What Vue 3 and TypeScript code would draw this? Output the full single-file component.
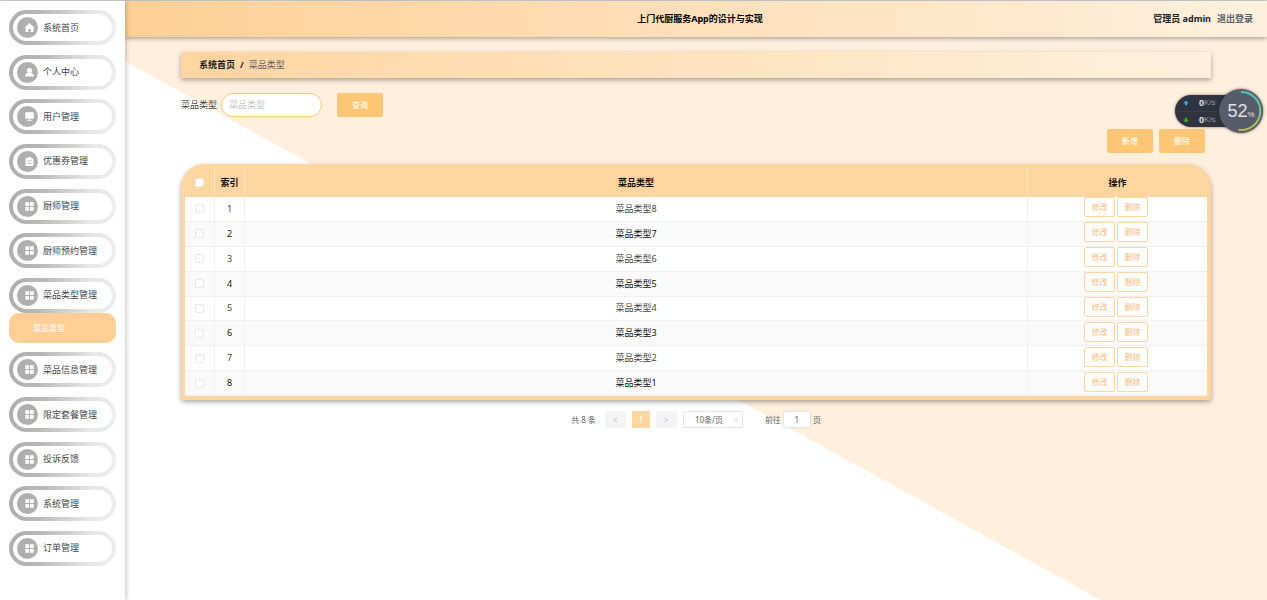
<script setup lang="ts">
import { ref } from 'vue'

interface MenuItem {
  label: string
  icon: 'home' | 'user' | 'screen' | 'clip' | 'grid'
  child?: string
}

const menu: MenuItem[] = [
  { label: '系统首页', icon: 'home' },
  { label: '个人中心', icon: 'user' },
  { label: '用户管理', icon: 'screen' },
  { label: '优惠券管理', icon: 'clip' },
  { label: '厨师管理', icon: 'grid' },
  { label: '厨师预约管理', icon: 'grid' },
  { label: '菜品类型管理', icon: 'grid', child: '菜品类型' },
  { label: '菜品信息管理', icon: 'grid' },
  { label: '限定套餐管理', icon: 'grid' },
  { label: '投诉反馈', icon: 'grid' },
  { label: '系统管理', icon: 'grid' },
  { label: '订单管理', icon: 'grid' },
]

const icons: Record<MenuItem['icon'], string> = {
  home: 'M8 0 L0 7.5 V9 H1 V16 H6 V10.5 H10 V16 H15 V9 H16 V7.5 Z',
  user: 'M8 0 C11 0 12.6 2 12.6 4.4 C12.6 6.4 11.6 7.8 10.4 8.6 C13.6 9.4 15.8 11 15.8 15 H0.2 C0.2 11 2.4 9.4 5.6 8.6 C4.4 7.8 3.4 6.4 3.4 4.4 C3.4 2 5 0 8 0 Z',
  screen: 'M0.5 0.5 H15.5 V12 H9 V14 H12 V15.5 H4 V14 H7 V12 H0.5 Z',
  clip: 'M5 0 H11 V2 H15 V16 H1 V2 H5 Z M4 6 V7.4 H12 V6 Z M4 10.5 V11.9 H12 V10.5 Z',
  grid: 'M0.5 0.5 H7.2 V7.2 H0.5 Z M8.8 0.5 H15.5 V7.2 H8.8 Z M0.5 8.8 H7.2 V15.5 H0.5 Z M8.8 8.8 H15.5 V15.5 H8.8 Z',
}

const rows = ref([8, 7, 6, 5, 4, 3, 2, 1].map((n) => ({ name: `菜品类型${n}`, checked: false })))
const keyword = ref('')
const pageSize = ref('10')
const jump = ref('1')
</script>

<template>
  <div class="layout">
    <nav class="sidebar">
      <div v-for="item in menu" :key="item.label" class="group">
        <a href="#" class="item">
          <span class="disc">
            <svg viewBox="0 0 16 16" aria-hidden="true"><path :d="icons[item.icon]" fill-rule="evenodd" /></svg>
          </span>
          <span>{{ item.label }}</span>
        </a>
        <a v-if="item.child" href="#" class="child">{{ item.child }}</a>
      </div>
    </nav>

    <div class="main">
      <header class="topbar">
        <h1>上门代厨服务App的设计与实现</h1>
        <div class="account">
          <span>管理员 admin</span>
          <a href="#">退出登录</a>
        </div>
      </header>

      <main class="content">
        <div class="crumbs">
          <a href="#">系统首页</a>
          <b>/</b>
          <span>菜品类型</span>
        </div>

        <form class="search" @submit.prevent>
          <label for="keyword">菜品类型</label>
          <input id="keyword" v-model="keyword" type="text" placeholder="菜品类型" />
          <button type="submit" class="solid">查询</button>
        </form>

        <div class="actions">
          <button type="button" class="solid">新增</button>
          <button type="button" class="solid">删除</button>
        </div>

        <div class="card">
          <table>
            <colgroup>
              <col class="c-check" />
              <col class="c-index" />
              <col />
              <col class="c-ops" />
            </colgroup>
            <thead>
              <tr>
                <th><input type="checkbox" aria-label="全选" /></th>
                <th>索引</th>
                <th>菜品类型</th>
                <th>操作</th>
              </tr>
            </thead>
            <tbody>
              <tr v-for="(row, i) in rows" :key="row.name">
                <td><input v-model="row.checked" type="checkbox" :aria-label="row.name" /></td>
                <td>{{ i + 1 }}</td>
                <td>{{ row.name }}</td>
                <td>
                  <div class="ops">
                    <button type="button">修改</button>
                    <button type="button">删除</button>
                  </div>
                </td>
              </tr>
            </tbody>
          </table>
        </div>

        <div class="pager">
          <span class="total">共 8 条</span>
          <button type="button" class="step" aria-label="上一页">&lt;</button>
          <button type="button" class="current">1</button>
          <button type="button" class="step" aria-label="下一页">&gt;</button>
          <span class="size">
            <select v-model="pageSize" aria-label="每页条数">
              <option value="10">10条/页</option>
              <option value="20">20条/页</option>
            </select>
            <svg viewBox="0 0 8 8" aria-hidden="true"><path d="M1 2.5 L4 5.5 L7 2.5" /></svg>
          </span>
          <label class="jump">前往<input v-model="jump" type="text" />页</label>
        </div>
      </main>
    </div>

    <aside class="monitor">
      <div class="rates">
        <div class="rate">
          <svg viewBox="0 0 8 8" class="up" aria-hidden="true"><path d="M4 0.5 L7.8 4.4 H5.4 V7 H2.6 V4.4 H0.2 Z" /></svg>
          <b>0</b><small>K/s</small>
        </div>
        <div class="rate">
          <svg viewBox="0 0 8 8" class="down" aria-hidden="true"><path d="M4 7.5 L0.2 3.6 H2.6 V1 H5.4 V3.6 H7.8 Z" /></svg>
          <b>0</b><small>K/s</small>
        </div>
      </div>
      <div class="gauge">
        <svg viewBox="0 0 44 44" aria-hidden="true">
          <defs>
            <linearGradient id="arc" x1="0" y1="0" x2="0" y2="1">
              <stop offset="0" stop-color="#45c8c8" />
              <stop offset="0.6" stop-color="#7ccb8c" />
              <stop offset="1" stop-color="#b5c040" />
            </linearGradient>
          </defs>
          <path d="M22 3 A19 19 0 1 1 19.6 40.8" />
        </svg>
        <span>52</span><small>%</small>
      </div>
    </aside>
  </div>
</template>

<style>
body {
  margin: 0;
}
</style>

<style scoped>
.layout {
  position: relative;
  display: flex;
  min-height: 100vh;
  box-sizing: border-box;
  border-top: 1px solid #d5dadf;
  font-family: 'Noto Sans', 'Noto Sans CJK SC', sans-serif;
  font-size: 8px;
  line-height: 12px;
  color: #444;
}
.layout * {
  box-sizing: border-box;
}
a {
  color: inherit;
  text-decoration: none;
}
button,
input,
select {
  margin: 0;
  padding: 0;
  font: inherit;
  outline: none;
}
button {
  cursor: pointer;
}

.sidebar {
  position: relative;
  z-index: 2;
  flex: 0 0 125px;
  display: flex;
  flex-direction: column;
  justify-content: space-between;
  padding: 9px 9px 34px;
  background: #fff;
  box-shadow: 1px 0 5px rgba(0, 0, 0, 0.25);
}
.item {
  display: flex;
  align-items: center;
  gap: 5px;
  height: 35px;
  width: 107px;
  padding-left: 4px;
  border: 4px solid transparent;
  border-radius: 18px;
  background:
    linear-gradient(#fff, #fff) padding-box,
    linear-gradient(100deg, #aeaeae 0%, #b8b8b8 30%, #e6e6e6 75%, #eee 100%) border-box;
  font-size: 9px;
}
.disc {
  display: flex;
  align-items: center;
  justify-content: flex-end;
  width: 21px;
  height: 21px;
  padding-right: 4px;
  border-radius: 50%;
  background: #afafaf;
}
.disc svg {
  width: 9px;
  height: 9px;
  fill: #fff;
}
.child {
  display: flex;
  align-items: center;
  width: 107px;
  height: 30px;
  padding-left: 24px;
  border-radius: 10px;
  background: #ffcf96;
  color: #fff;
}

.main {
  flex: 1;
  min-width: 0;
  background: linear-gradient(28.9deg, #fff 471px, #fff0de 472px);
}
.topbar {
  display: grid;
  grid-template-columns: 1fr auto 1fr;
  align-items: center;
  height: 36px;
  padding: 0 14px 0 22px;
  background: linear-gradient(90deg, #ffcf96, #fff0de);
  box-shadow: 0 1px 5px rgba(0, 0, 0, 0.4);
  font-size: 9px;
  font-weight: 700;
}
.topbar h1 {
  grid-column: 2;
  margin: 0;
  font-size: 9px;
  color: #000;
}
.account {
  display: flex;
  justify-content: flex-end;
  gap: 6px;
  color: #222;
}
.account a {
  color: #53616a;
}

.content {
  padding: 15px 56px 0;
}
.crumbs {
  display: flex;
  align-items: center;
  gap: 5px;
  height: 26px;
  padding-left: 18px;
  background: linear-gradient(90deg, #ffd5a0, #fff0de);
  box-shadow: 0 2px 5px rgba(0, 0, 0, 0.35);
  font-size: 9px;
  color: #5a5c6c;
}
.crumbs a,
.crumbs b {
  font-weight: 700;
  color: #1d1f26;
}
.search {
  display: flex;
  align-items: center;
  margin-top: 15px;
  font-size: 9px;
}
.search label {
  width: 40px;
}
.search input {
  width: 101px;
  height: 24px;
  margin-right: 15px;
  padding: 0 7px 2px;
  border: 1px solid #ffc775;
  border-radius: 12px;
  background: #fff;
}
.search input::placeholder {
  color: #c3c6ce;
  opacity: 1;
}
.solid {
  width: 46px;
  height: 24px;
  border: 0;
  border-radius: 2px;
  background: #ffc775;
  font-size: 8px;
  color: #fff;
}
.actions {
  display: flex;
  justify-content: flex-end;
  gap: 6px;
  margin-top: 12px;
  padding-right: 6px;
}

.card {
  margin-top: 11px;
  padding: 4px;
  overflow: hidden;
  border-radius: 24px 24px 3px 3px;
  background: #ffd5a0;
  box-shadow: 0 2px 5px rgba(0, 0, 0, 0.35);
}
table {
  width: 100%;
  height: 228px;
  table-layout: fixed;
  border-collapse: separate;
  border-spacing: 0;
  text-align: center;
  font-size: 9px;
}
.c-check,
.c-index {
  width: 30px;
}
.c-ops {
  width: 179px;
}
th {
  height: 29px;
  padding: 0;
  border-right: 1px solid #f3e2cc;
  color: #111;
}
thead tr {
  height: 29px;
}
th:last-child,
td:last-child {
  border-right: 0;
}
td {
  padding: 0;
  border-right: 1px solid #f0f0f0;
  border-bottom: 1px solid #f0f0f0;
  background: #fff;
}
tbody tr:nth-child(even) td {
  background: #fafafa;
  color: #111;
}
input[type='checkbox'] {
  display: block;
  width: 9px;
  height: 9px;
  margin: 0 auto;
  appearance: none;
  border: 1px solid #e6e8ec;
  border-radius: 2px;
  background: #fff;
}
.ops {
  display: flex;
  justify-content: center;
  gap: 2px;
  padding: 0 3px 3px 0;
}
.ops button {
  width: 31px;
  height: 20px;
  border: 1px solid #ffd5a0;
  border-radius: 2px;
  background: #fff;
  font-size: 8px;
  color: #f5bd7c;
}

.pager {
  display: flex;
  align-items: center;
  justify-content: center;
  gap: 6px;
  margin-top: 11px;
  color: #606266;
}
.total {
  margin-right: 3px;
}
.step,
.current {
  height: 17px;
  border: 0;
  border-radius: 1px;
}
.step {
  width: 21px;
  background: #f4f4f5;
  color: #c0c4cc;
}
.current {
  width: 18px;
  background: #ffd5a0;
  color: #fff;
}
.size {
  display: flex;
  align-items: center;
}
.size select {
  width: 60px;
  height: 17px;
  padding-left: 11px;
  appearance: none;
  border: 1px solid #e2e4ea;
  border-radius: 2px;
  background: #fff;
  color: #606266;
}
.size svg {
  width: 6px;
  height: 6px;
  margin-left: -10px;
  margin-right: 4px;
  fill: none;
  stroke: #c0c4cc;
}
.jump {
  display: flex;
  align-items: center;
  gap: 2px;
  margin-left: 16px;
}
.jump input {
  width: 28px;
  height: 17px;
  border: 1px solid #e2e4ea;
  border-radius: 2px;
  background: #fff;
  color: #606266;
  text-align: center;
}

.monitor {
  position: absolute;
  z-index: 3;
  top: 88px;
  right: 4px;
  display: flex;
  align-items: center;
  font-family: 'Liberation Sans', Arial, sans-serif;
}
.rates {
  width: 60px;
  height: 32px;
  margin-right: -16px;
  border-radius: 16px 0 0 16px;
  background: #30343e;
  box-shadow: 0 0 3px rgba(0, 0, 0, 0.5);
}
.rate {
  display: flex;
  align-items: center;
  height: 16px;
  padding-left: 8px;
  color: #e8e8ea;
}
.rate + .rate {
  border-top: 1px solid #3a3e48;
}
.rate svg {
  width: 6px;
  height: 6px;
  margin-right: 10px;
}
.rate b {
  font-size: 9px;
}
.rate small {
  font-size: 8px;
  color: #9a9ca4;
}
.up {
  fill: #3aa5e0;
}
.down {
  fill: #38a838;
}
.gauge {
  position: relative;
  display: flex;
  align-items: center;
  justify-content: center;
  width: 44px;
  height: 44px;
  border-radius: 50%;
  background: #585b68;
  box-shadow: 0 0 3px rgba(0, 0, 0, 0.6);
  color: #e2e2e6;
}
.gauge svg {
  position: absolute;
  inset: 0;
  fill: none;
  stroke: url(#arc);
  stroke-width: 2;
}
.gauge span {
  font-size: 18px;
  line-height: 20px;
}
.gauge small {
  padding-top: 8px;
  font-size: 8px;
}
</style>
